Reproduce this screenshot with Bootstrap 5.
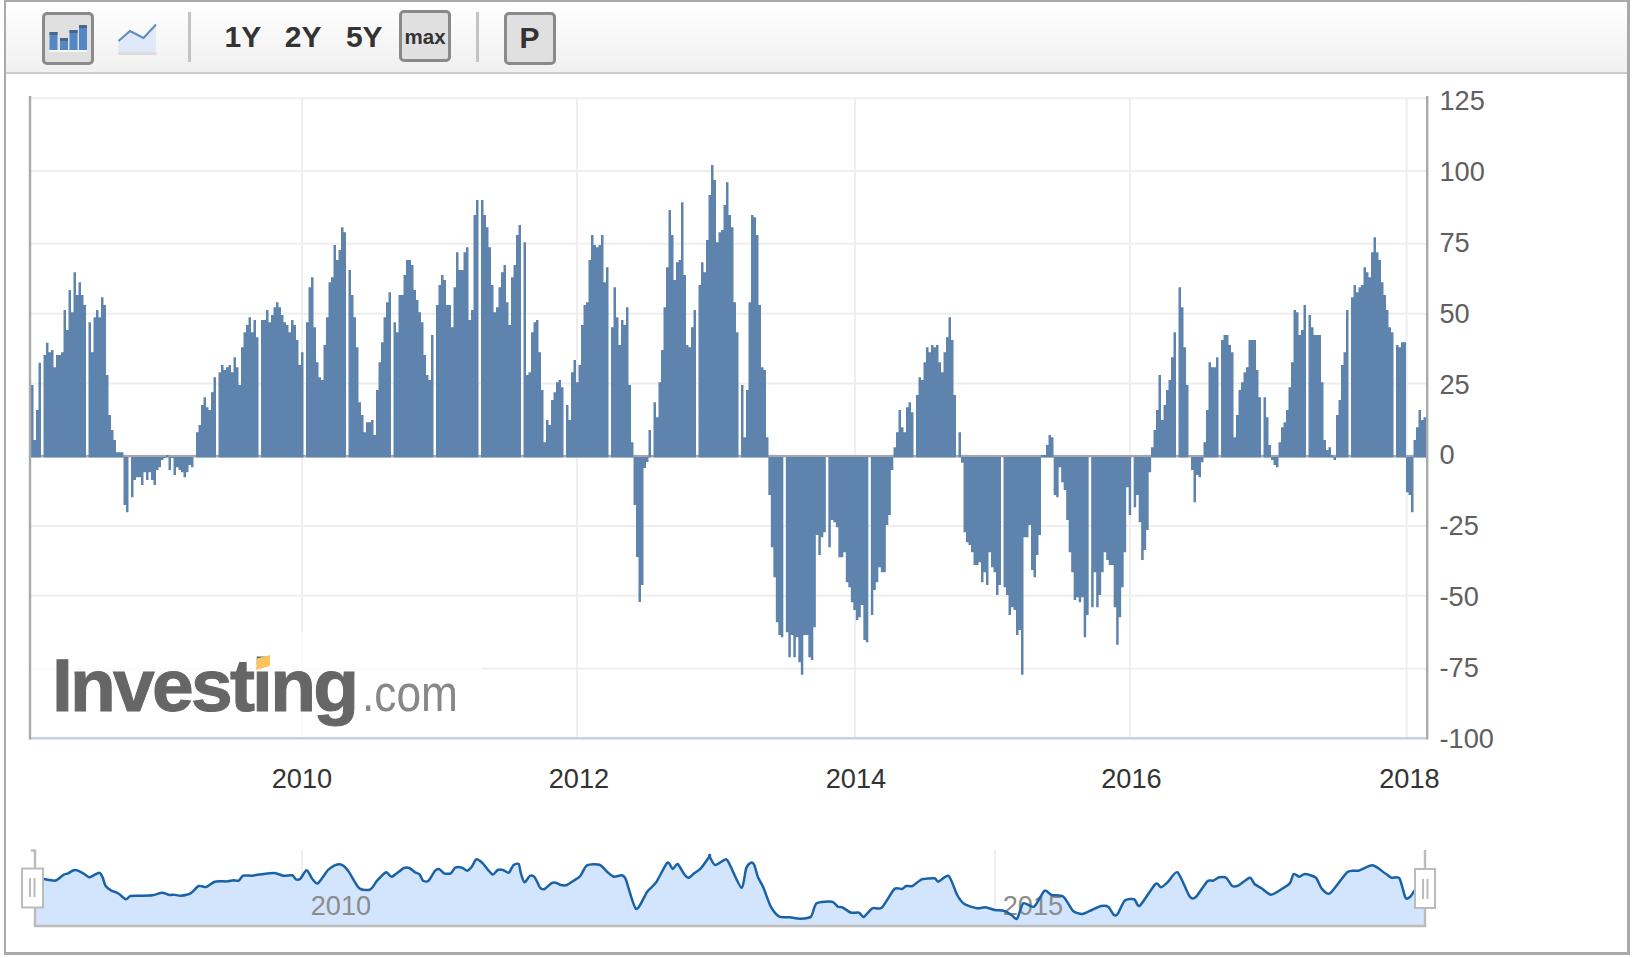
<!DOCTYPE html>
<html lang="en">
<head>
<meta charset="utf-8">
<title>Investing.com chart</title>
<link href="https://cdn.jsdelivr.net/npm/bootstrap@5.3.0/dist/css/bootstrap.min.css" rel="stylesheet">
<style>
html,body{margin:0;background:#fff;overflow:hidden}
body{font-family:"Liberation Sans",Arial,sans-serif}
.chart-frame{margin-left:4px;width:1626px;height:955px;border:solid #aaa;border-width:2px 3px 3px 2px;background:#fff}
.tool-strip{height:72px;background:linear-gradient(#fff,#f0f0f0);border-bottom:2.5px solid #ccc;padding-left:36px}
.btn.tool-box{width:52px;height:53px;margin-top:10px;padding:0 0 2px;border:3px solid #8a8a8a;border-radius:5px;background:#e0e0e0;color:#333;font-weight:700;font-size:30px;line-height:1}
.btn.tool-box.tool-max{height:52px;margin-top:8px;padding:2px 0 0;font-size:20.5px}
.tool-line{width:40px;margin-left:23px;margin-top:21px}
.tool-sep{width:2.5px;height:50px;margin-top:10px;background:#c4c4c4}
.tool-period{font-size:30px;font-weight:700;color:#333;line-height:1;margin-top:20px}
.sep-a{margin-left:31px}.per-a{margin-left:34px}.per-b{margin-left:23.5px}.per-c{margin-left:24.5px}
.box-max{margin-left:16.5px}.sep-b{margin-left:25px}.box-p{margin-left:25px}
.chart-svg{display:block}
.chart-svg text{font-family:"Liberation Sans",Arial,sans-serif;font-size:27.2px}
.lab-y{fill:#606060}.lab-x{fill:#333}.lab-nav{fill:#8c8c8c}
.chart-svg .logo-main{font-size:75px;font-weight:700;fill:#666;stroke:#666;stroke-width:1;filter:blur(.5px)}
.chart-svg .logo-com{font-size:52px;fill:#888;filter:blur(.3px)}
</style>
</head>
<body>
<div class="chart-frame">
  <div class="tool-strip d-flex align-items-start">
    <button class="btn tool-box d-flex align-items-center justify-content-center" type="button" aria-label="Bars">
      <svg width="40" height="32" viewBox="0 0 40 32">
        <rect x="1.5" y="10" width="8" height="18" fill="#5588c2"/><rect x="1.5" y="10" width="8" height="3" fill="#46668c"/>
        <rect x="12" y="16" width="8" height="12" fill="#5588c2"/><rect x="12" y="16" width="8" height="3" fill="#46668c"/>
        <rect x="21.5" y="8" width="8" height="20" fill="#5588c2"/><rect x="21.5" y="8" width="8" height="3" fill="#46668c"/>
        <rect x="31" y="3" width="8" height="25" fill="#5588c2"/><rect x="31" y="3" width="8" height="3" fill="#46668c"/>
        <rect x="1.5" y="28" width="37.5" height="2" fill="#f4f7fb"/>
      </svg>
    </button>
    <div class="tool-line">
      <svg class="d-block" width="40" height="33" viewBox="0 0 40 33">
        <path d="M1.5 18 13 8l13.500 7L39 1.500V29H1.500Z" fill="#dfe9f7"/>
        <rect x="1.500" y="29" width="38" height="3" fill="#dcdcdc"/>
        <path d="M1.500 18 13 8l13.500 7L39 1.500" fill="none" stroke="#5b8cc4" stroke-width="2"/>
      </svg>
    </div>
    <div class="tool-sep sep-a"></div>
    <div class="tool-period per-a">1Y</div>
    <div class="tool-period per-b">2Y</div>
    <div class="tool-period per-c">5Y</div>
    <button class="btn tool-box tool-max box-max d-flex align-items-center justify-content-center" type="button">max</button>
    <div class="tool-sep sep-b"></div>
    <button class="btn tool-box box-p d-flex align-items-center justify-content-center" type="button">P</button>
  </div>
  <svg class="chart-svg" id="plot" width="1621" height="878" viewBox="6 74 1621 878" xmlns="http://www.w3.org/2000/svg">
    <g id="grid" fill="#eee"></g>
    <rect x="31" y="632" width="452" height="105" fill="#fff" opacity=".75"/>
    <text class="logo-main" x="52" y="711" textLength="307">Investing</text>
    <polygon points="257,658.500 270,655 270,666 256,670" fill="#fdc35f"/>
    <text class="logo-com" x="362" y="711" textLength="96" lengthAdjust="spacingAndGlyphs">.com</text>
    <rect x="31" y="455" width="1395" height="2.300" fill="#a6a6a6"/>
    <path id="bars" fill="#5e84ae"/>
    <rect x="29" y="737" width="1398" height="2.500" fill="#c3d3e3"/>
    <rect x="28.800" y="96" width="2.400" height="643.500" fill="#aaa"/>
    <rect x="1426" y="96" width="2.400" height="643.500" fill="#aaa"/>
    <g id="ylabels" class="lab-y"></g>
    <g class="lab-x" text-anchor="middle">
      <text x="302" y="787.500">2010</text><text x="579" y="787.500">2012</text><text x="856" y="787.500">2014</text><text x="1131.500" y="787.500">2016</text><text x="1409.500" y="787.500">2018</text>
    </g>
    <rect x="301" y="850" width="2" height="76" fill="#eee"/>
    <rect x="994" y="850" width="2" height="76" fill="#eee"/>
    <path id="navfill" fill="#d2e5fc"/>
    <g class="lab-nav" text-anchor="middle"><text x="341" y="915">2010</text><text x="1033" y="915">2015</text></g>
    <path id="navline" fill="none" stroke="#1a62a8" stroke-width="2.500" stroke-linejoin="round" stroke-linecap="round"/>
    <path d="M31 850.500H35V926H1425V850" fill="none" stroke="#bbb" stroke-width="2.400"/>
    <g fill="#fff" stroke="#bbb" stroke-width="2">
      <rect x="22" y="868.500" width="21" height="39"/>
      <rect x="1415" y="869" width="20" height="39"/>
    </g>
    <path d="M30 878V897M34.500 878V897M1423 879V899M1427.500 879V899" stroke="#bbb" stroke-width="2" fill="none"/>
  </svg>
</div>
<script>
const NS='http://www.w3.org/2000/svg';
const G=null;
// Each run: origin x of the crop, first column in crop pixels, origin y, then tops in crop pixels.
const runs=[
[20,33,220,[495,660,570,428,G,405,368,397,390,442,405,405,397,270,330,210,277,157,225,187,225,255,G,307,397,292,270,292,232,255,465,585,630,660,697,697,697,855,877,G,832,780,772,772,795,757,780,757,780,795,750,742,720,714,705,750,714,765,742,750,757,772,757,735,742,G,637,615,555,532,562,570,517,472,G,457,435,450,442,435,457,412,442,495,382,337,315,292,337,300,352,G,300,300,270,307,285,262,247,262,285,307,315,337,300,315,360,435,397,G,307,202,172,322,427,472,480,375,292,187,172,75,120,90,22,37,G,150,225,292,382,547,585,637,607,607,600,645,510,427,367,292,247,217,G,307,337,225,225,165,120,120,135,210,240,277,307,405,465,480,345,G]],
[420,48,150,[465,405,375,390,465,465,532,412,307,360,360,307,292,510,480,195,150,G,150,195,232,292,405,487,472,412,367,345,457,525,382,345,255,225,G,277,675,667,547,517,510,607,720,877,810,825,750,727,697,690,712,G,765,810,667,630,697,645,525,465,457,330,255,285,292,285,255,397,352,G,532,412,502,585,510,525,472,705,877,1065,1221,1356,1305,954,936,840,G,757,802,697,600,472,352,180,255,390,337,330,157,375,585,592,532,480,G,405,337,367,270,135,45,90,277,247,240,165,97,195,232,457,547,G,705,862,720,457,195,202,255,465,652,660,862]],
[760,25,440,[165,322,412,547,585,592,G,577,652,585,652,592,667,704,585,585,652,660,562,285,345,292,277,G,322,240,247,262,352,352,337,427,442,487,510,540,532,495,600,607,G,525,450,427,382,397,397,255,225,90]],
[885,25.500,305,[427,382,315,367,382,307,292,322,G,270,217,225,172,127,142,120,127,120,172,202,142,97,37,105,270,G,382]],
[760,603,440,[68,277,307,315,337,375,375,367,427,397,435,337,382,397,465,435,G,442,465,525,502,510,585,570,704,292,292,255,390,412,345,285]],
[1040,3,220,[705,705,675,645,652]],
[760,881,440,[165,172,82,127,150,240,337,397,480,472,487,472,592,525,G,502,397,502,465,397,337,360,375,375,502,614,532,442,337,142,225,G,202,165,247,360,330,270,97]],
[1040,333,220,[682,630,570,465,600,555,510,480,412,337,G,202,262,382,495,G,750,847,765,772,727,667,570,427,442,442,412,G,360,345,345,375,397,652,585,510,487,457,442,360,360,360,450,532,G,532,592,675,720,735,742,667,622,607,570,502,427,270,277,345,330,255,G,285,322,345,345,345,487,660,690,682,705,720,585,540,435,397,270,G,232,195,217,202,195,142,157,172,97,52,97,120,187,225,270,322,337,G,375,382,367,367,817,825,877,660,622,570,600,592]]
];
let d='';
for(const [ox,zx,oy,tops] of runs){
  let x=ox+zx/3;
  for(const t of tops){
    if(t!==null){
      const y=oy+t/3, base=y<456.500?457.500:457;
      d+=`M${x.toFixed(2)} ${y.toFixed(1)}H${(x+2.5).toFixed(2)}V${base}H${x.toFixed(2)}Z`;
    }
    x+=2.5;
  }
}
document.getElementById('bars').setAttribute('d',d);

const grid=document.getElementById('grid');
const ys=[[125,98.300],[100,171],[75,243.700],[50,313.700],[25,383.500],[0,455.500],[-25,526],[-50,595.700],[-75,668.700],[-100,738]];
const lab=document.getElementById('ylabels');
ys.forEach(([v,y],i)=>{
  const r=document.createElementNS(NS,'rect');
  r.setAttribute('x',31);r.setAttribute('y',y-1);r.setAttribute('width',1395);r.setAttribute('height',2);grid.appendChild(r);
  const t=document.createElementNS(NS,'text');
  t.setAttribute('x',1439.5);t.setAttribute('y',(110+70.9*i-(v===0?1:0)).toFixed(1));t.textContent=v;lab.appendChild(t);
});
for(const x of [302,577,855,1130,1406.700]){
  const r=document.createElementNS(NS,'rect');
  r.setAttribute('x',x-1);r.setAttribute('y',98);r.setAttribute('width',2);r.setAttribute('height',640);grid.appendChild(r);
}

const a=[[52,116],[65,120],[78,122],[85,118],[98,104],[108,100],[120,91],[130,92],[145,103],[155,112],[165,106],[178,98],[185,112],[192,138],[205,152],[220,160],[237,178],[247,168],[265,167],[297,166],[318,158],[335,165],[345,164],[360,167],[382,160],[400,138],[417,141],[435,126],[450,124],[465,124],[478,121],[490,122],[500,107],[520,107],[540,103],[570,99],[590,107],[610,106],[618,118],[628,116],[642,91],[655,117],[667,130],[690,90],[705,76],[720,74],[735,92],[760,145],[785,148],[800,122],[820,97],[833,110],[860,84],[872,84],[885,97],[895,103],[903,122],[915,122],[930,92],[940,88],[950,100],[965,100],[975,83],[990,83],[1002,92],[1012,80],[1022,58],[1035,68],[1058,103],[1070,90],[1082,90],[1095,98],[1105,76],[1117,72],[1122,100],[1130,127],[1142,108],[1153,112],[1165,143],[1175,147],[1190,130],[1200,128],[1212,135],[1225,135],[1240,122],[1255,108],[1270,76],[1298,74],[1315,95],[1330,110],[1348,106],[1357,118],[1380,207],[1405,155],[1425,127],[1450,68],[1462,87],[1473,72],[1488,103],[1498,113],[1510,100],[1525,85],[1545,48]];
const b=[[0,88],[20,48],[32,75],[55,58],[65,80],[88,143],[98,85],[108,68],[115,75],[123,112],[135,145],[150,200],[168,230],[190,232],[212,236],[235,230],[247,190],[280,185],[292,200],[302,202],[320,218],[337,218],[347,231],[365,205],[385,203],[412,147],[428,147],[437,138],[450,138],[470,118],[497,115],[505,125],[527,108],[545,165],[560,192],[587,205],[605,202],[625,210],[645,213],[660,225],[672,236],[685,190],[708,200],[730,152],[745,165],[770,170],[790,212],[810,222],[830,210],[850,198],[865,200],[877,225],[885,222],[900,182],[920,178],[932,197],[965,132],[977,142],[992,125],[1012,97],[1037,168],[1050,172],[1075,124],[1087,122],[1100,112],[1115,113],[1127,137],[1140,137],[1165,113],[1175,132],[1190,145],[1210,164],[1235,145],[1250,130],[1258,102],[1270,110],[1282,102],[1305,113],[1317,145],[1335,160],[1372,96],[1395,92],[1425,76],[1450,98],[1465,113],[1482,115],[1495,173],[1505,170],[1515,150]];
const pts=[...a.map(p=>[20+p[0]/2.24,840+p[1]/3]),...b.slice(1).map(p=>[700+p[0]/2.119,840+p[1]/3])];
// Smooth the sampled line: tighter than midpoint rounding, so peaks keep their height.
let curve='M'+pts[0][0].toFixed(1)+' '+pts[0][1].toFixed(1);
for(let i=0;i<pts.length-1;i++){
  const p0=pts[Math.max(i-1,0)],p1=pts[i],p2=pts[i+1],p3=pts[Math.min(i+2,pts.length-1)],k=0.12;
  curve+=`C${(p1[0]+(p2[0]-p0[0])*k).toFixed(1)} ${(p1[1]+(p2[1]-p0[1])*k).toFixed(1)} ${(p2[0]-(p3[0]-p1[0])*k).toFixed(1)} ${(p2[1]-(p3[1]-p1[1])*k).toFixed(1)} ${p2[0].toFixed(1)} ${p2[1].toFixed(1)}`;
}
document.getElementById('navline').setAttribute('d',curve);
document.getElementById('navfill').setAttribute('d','M35 925V878L'+curve.slice(1)+'L1424 888V925Z');
</script>
<script src="https://cdn.jsdelivr.net/npm/bootstrap@5.3.0/dist/js/bootstrap.bundle.min.js"></script>
</body>
</html>
